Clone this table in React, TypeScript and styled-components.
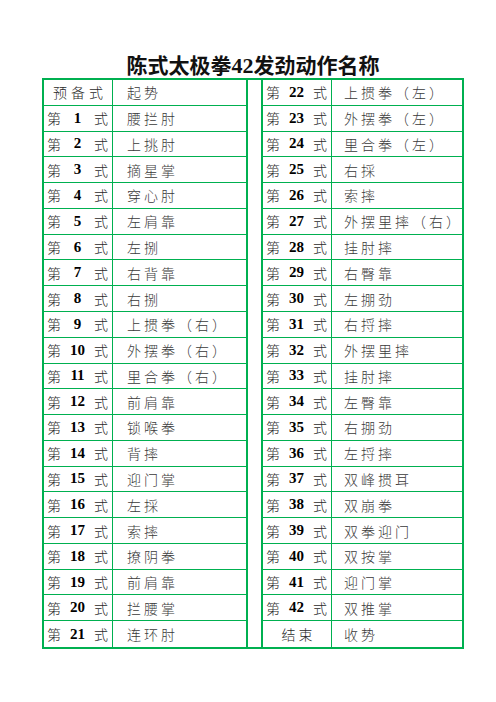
import React from "react";
import styled, { createGlobalStyle } from "styled-components";

const GREEN = "#00b050";
const CJK = `"Noto Sans CJK SC", "Noto Sans", sans-serif`;

const Global = createGlobalStyle`
  html, body { margin: 0; padding: 0; background: #fff; }
  body { width: 496px; height: 702px; font-family: ${CJK}; }
  * { box-sizing: border-box; }
`;

const Page = styled.div`
  width: 496px;
  padding: 50px 32px 0 42px;
  display: flex;
  flex-direction: column;
`;

const Title = styled.h1`
  margin: 0;
  height: 28px;
  line-height: 28px;
  text-align: center;
  font-family: ${CJK};
  font-weight: 700;
  font-size: 21px;
  color: #111;
`;

const TitleNum = styled.span`
  font-family: "Liberation Serif", serif;
  font-weight: 700;
  font-size: 22px;
`;

const Frame = styled.div`
  width: 422px;
  height: 571px;
  border: 2px solid ${GREEN};
  display: flex;
`;

const Half = styled.div<{ $name: number }>`
  display: grid;
  grid-template-columns: 69px ${(p) => p.$name}px;
  grid-template-rows: repeat(22, 1fr);
`;

const Spacer = styled.div`
  width: 17px;
  border-left: 2px solid ${GREEN};
  border-right: 2px solid ${GREEN};
`;

const LabelCell = styled.div<{ $last?: boolean }>`
  border-right: 1px solid ${GREEN};
  border-bottom: ${(p) => (p.$last ? "none" : `1px solid ${GREEN}`)};
  display: flex;
  align-items: center;
  justify-content: space-between;
  padding: 0 4px 0 3px;
  font-family: ${CJK};
  font-weight: 300;
  font-size: 14px;
  color: #2a2a2a;
`;

const CenterLabel = styled(LabelCell)<{ $spacing: number }>`
  justify-content: center;
  letter-spacing: ${(p) => p.$spacing}px;
  padding: 0 0 0 ${(p) => p.$spacing}px;
`;

const Num = styled.span`
  font-family: "Liberation Serif", serif;
  font-weight: 700;
  font-size: 15px;
  color: #000;
`;

const NameCell = styled.div<{ $last?: boolean; $indent: number }>`
  border-bottom: ${(p) => (p.$last ? "none" : `1px solid ${GREEN}`)};
  display: flex;
  align-items: center;
  padding-left: ${(p) => p.$indent}px;
  font-family: ${CJK};
  font-weight: 300;
  font-size: 14px;
  letter-spacing: 3px;
  color: #3a3a3a;
  white-space: nowrap;
`;

const leftNames = [
  "腰拦肘", "上挑肘", "摘星掌", "穿心肘", "左肩靠", "左捌", "右背靠", "右捌",
  "上掼拳（右）", "外摆拳（右）", "里合拳（右）", "前肩靠", "锁喉拳", "背摔",
  "迎门掌", "左採", "索摔", "撩阴拳", "前肩靠", "拦腰掌", "连环肘",
];

const rightNames = [
  "上掼拳（左）", "外摆拳（左）", "里合拳（左）", "右採", "索摔", "外摆里摔（右）",
  "挂肘摔", "右臀靠", "左掤劲", "右捋摔", "外摆里摔", "挂肘摔", "左臀靠", "右掤劲",
  "左捋摔", "双峰掼耳", "双崩拳", "双拳迎门", "双按掌", "迎门掌", "双推掌",
];

const Row = ({ n, name, last, indent }: { n: number; name: string; last?: boolean; indent: number }) => (
  <>
    <LabelCell $last={last}>
      <span>第</span>
      <Num>{n}</Num>
      <span>式</span>
    </LabelCell>
    <NameCell $last={last} $indent={indent}>{name}</NameCell>
  </>
);

export default function App() {
  return (
    <>
      <Global />
      <Page>
        <Title>
          陈式太极拳<TitleNum>42</TitleNum>发劲动作名称
        </Title>
        <Frame>
          <Half $name={133}>
            <CenterLabel $spacing={4}>预备式</CenterLabel>
            <NameCell $indent={14}>起势</NameCell>
            {leftNames.map((name, i) => (
              <Row key={i} n={i + 1} name={name} indent={14} last={i === leftNames.length - 1} />
            ))}
          </Half>
          <Spacer />
          <Half $name={130}>
            {rightNames.map((name, i) => (
              <Row key={i} n={i + 22} name={name} indent={12} />
            ))}
            <CenterLabel $spacing={3} $last>结束</CenterLabel>
            <NameCell $indent={12} $last>收势</NameCell>
          </Half>
        </Frame>
      </Page>
    </>
  );
}
